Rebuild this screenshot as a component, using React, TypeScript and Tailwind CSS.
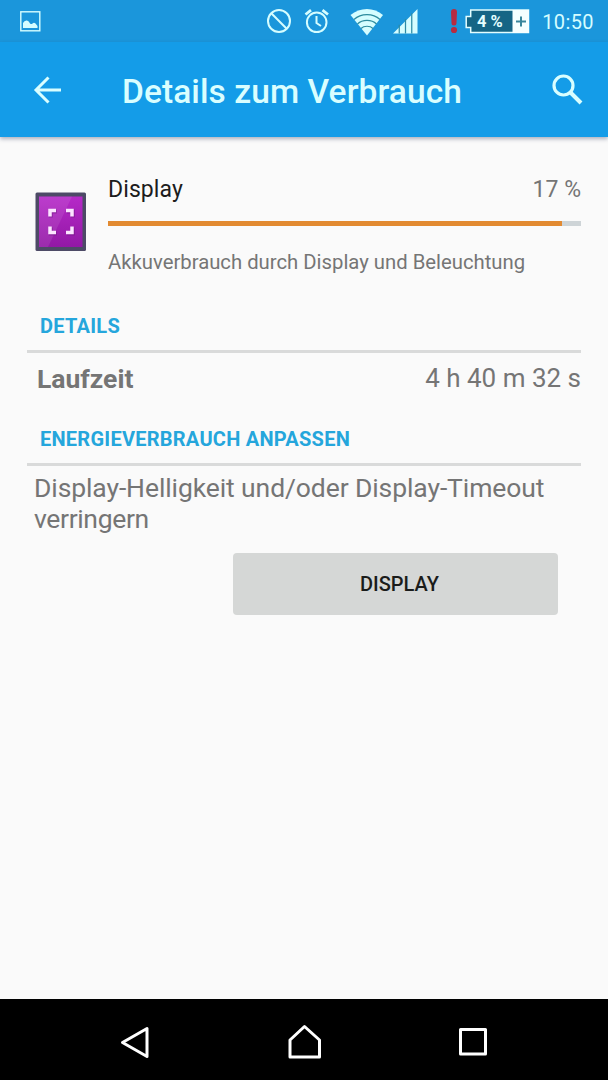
import type { ReactNode } from "react";

function StatusBar() {
  return (
    <div className="flex h-[42px] items-center bg-[#1b96db] pl-5 pr-[14px] text-[#d5fdff]">
      <svg width="21" height="21" viewBox="0 0 21 21" fill="none" className="shrink-0">
        <rect x="0.8" y="0.8" width="19" height="19" stroke="currentColor" strokeWidth="1.4" />
        <path d="M3 17v-5q1.500-3 4-2.500 2 .5 3 3 1.500 1 2.500 0 1.500-1.500 3 0l2 2.500v2z" fill="currentColor" />
      </svg>
      <svg width="26" height="26" viewBox="0 0 26 26" fill="none" stroke="currentColor" strokeWidth="2" className="ml-[225px] shrink-0">
        <circle cx="13" cy="13" r="11" />
        <path d="M5.300 5.300l15.400 15.400" />
      </svg>
      <svg width="26" height="26" viewBox="0 0 26 26" fill="none" stroke="currentColor" strokeWidth="2" className="ml-[12px] shrink-0">
        <circle cx="12.700" cy="14.300" r="9.800" />
        <path d="M12.500 8v7l4.500 3" />
        <path d="M1.500 6.500L7 2.200M24 6.500L18.500 2.200" strokeWidth="2.800" />
      </svg>
      <svg width="34" height="28" viewBox="0 0 34 28" className="ml-5 mt-px shrink-0">
        <path d="M0.500 7C10-1 24-1 33 7L17 27.500z" fill="currentColor" />
        <g fill="none" stroke="#2c8b9e" strokeWidth="1.200">
          <path d="M4 11.500c7-6.500 19-6.500 26 0" />
          <path d="M7.500 16c5-4.800 14-4.800 19 0" />
          <path d="M11 20.500c3-3 9-3 12 0" />
        </g>
      </svg>
      <svg width="25" height="27" viewBox="0 0 26 27" className="ml-[9px] mr-px mt-px shrink-0">
        <path d="M0 26L25.500 0.500V26z" fill="currentColor" />
        <path d="M6.500 17v9M13 11v15M19.500 5v21" stroke="#2c8ba5" strokeWidth="1.300" />
      </svg>
      <svg width="8" height="25" viewBox="0 0 8 25" fill="#b82b40" className="ml-[31px] shrink-0">
        <path d="M1 3q0-3 3-3t3 3L6.500 14q0 2.500-2.500 2.500T1.500 14z" />
        <circle cx="4" cy="21" r="3.100" />
      </svg>
      <div className="relative ml-[7px] h-[25px] w-[65px] shrink-0">
        <svg width="65" height="25" viewBox="0 0 65 25" fill="none">
          <path d="M5.700 1H63.500v22.500H5.700V18.500H1.200V7.500h4.500z" fill="#156585" stroke="#e4feff" strokeWidth="1.500" />
          <path d="M47.500 1H64v23H47.500z" fill="#f5ffff" />
          <path d="M56 7.500v10M51 12.500h10" stroke="#39869c" strokeWidth="2" />
        </svg>
        <span className="absolute left-[12px] top-0 whitespace-nowrap text-[16.500px] font-bold leading-[25px] text-[#e4feff]">4 %</span>
      </div>
      <span className="ml-auto mt-px whitespace-nowrap text-[20px] leading-[42px] tracking-[0.400px]">10:50</span>
    </div>
  );
}

function AppBar() {
  return (
    <header className="relative flex h-[95px] items-center bg-[#149ce8] pl-[33px] pr-[25px] text-[#d9feff] shadow-[0_2px_4px_rgba(30,40,80,0.35)]">
      <svg width="29" height="28" viewBox="0 0 29 28" fill="none" stroke="currentColor" strokeWidth="3" className="shrink-0">
        <path d="M28 14H3M15.500 1.500L3 14l12.500 12.500" />
      </svg>
      <h1 className="ml-[60px] mt-[4px] whitespace-nowrap text-[33.500px] font-medium leading-[40px] tracking-[0.080px]">Details zum Verbrauch</h1>
      <svg width="31" height="31" viewBox="0 0 31 31" fill="none" stroke="currentColor" className="ml-auto shrink-0">
        <circle cx="11.500" cy="11.500" r="9.500" strokeWidth="3.200" />
        <path d="M18.500 18.500l10.500 10.500" strokeWidth="4" />
      </svg>
    </header>
  );
}

function DisplayIcon() {
  return (
    <svg width="52" height="60" viewBox="0 0 52 60" className="ml-[35px] mt-[55px] shrink-0">
      <defs>
        <linearGradient id="panel" x1="0" y1="0" x2="0" y2="1">
          <stop offset="0" stopColor="#b629c8" />
          <stop offset="1" stopColor="#9218a5" />
        </linearGradient>
      </defs>
      <rect x="0.500" y="0.500" width="50.500" height="58.500" rx="1.500" fill="#4d4a66" />
      <rect x="4" y="4.500" width="43.500" height="50.500" fill="url(#panel)" />
      <path d="M4 4.500h33L13 55H4z" fill="#fff" opacity="0.090" />
      <g fill="none" stroke="#6d1480" strokeWidth="4" opacity="0.500" transform="translate(0.800 1)">
        <path d="M15 24.500v-6h6M31 18.500h6v6M15 34.500v6h6M31 40.500h6v-6" />
      </g>
      <path d="M15 24.500v-6h6M31 18.500h6v6M15 34.500v6h6M31 40.500h6v-6" fill="none" stroke="#fbe5ff" strokeWidth="3.500" />
    </svg>
  );
}

function SectionTitle({ children }: { children: ReactNode }) {
  return (
    <h2 className="ml-[27px] mr-[27px] flex h-[53px] items-center whitespace-nowrap border-b-[3px] border-[#d9dada] pl-[13px] pt-[2px] text-[20px] font-bold tracking-[0.250px] text-[#25a6dc]">
      {children}
    </h2>
  );
}

function NavBar() {
  return (
    <nav className="flex h-[81px] items-center bg-black pl-[120px] pt-[5px] text-white">
      <svg width="30" height="34" viewBox="0 0 30 34" fill="none" stroke="currentColor" strokeWidth="3" strokeLinejoin="round" className="mt-px">
        <path d="M27 2.500v28L2.500 16.500z" />
      </svg>
      <svg width="36" height="36" viewBox="0 0 36 36" fill="none" stroke="currentColor" strokeWidth="3" strokeLinejoin="round" className="ml-[137px]">
        <path d="M3 16L17.500 2.500 32.500 16v17H3z" />
      </svg>
      <svg width="30" height="30" viewBox="0 0 30 30" fill="none" stroke="currentColor" strokeWidth="3" strokeLinejoin="round" className="ml-[135px]">
        <rect x="2.500" y="2.500" width="25" height="24.500" />
      </svg>
    </nav>
  );
}

export default function App() {
  return (
    <div className="flex h-[1080px] w-[608px] flex-col overflow-hidden bg-[#fafafa] font-['Roboto',sans-serif] text-[#757575]">
      <StatusBar />
      <AppBar />
      <main className="flex flex-1 flex-col">
        <section className="flex h-[163px]">
          <DisplayIcon />
          <div className="ml-[21px] mr-[27px] flex-1 pt-[38px]">
            <div className="flex justify-between text-[23px] leading-[30px]">
              <span className="tracking-[0.100px] text-[#1c1c1c]">Display</span>
              <span>17 %</span>
            </div>
            <div className="mt-[16px] h-[5px] bg-[#ced4d7]">
              <div className="h-full w-[454px] bg-[#e28a31]" />
            </div>
            <p className="mt-[21px] whitespace-nowrap text-[20.300px] leading-[30px]">Akkuverbrauch durch Display und Beleuchtung</p>
          </div>
        </section>
        <SectionTitle>DETAILS</SectionTitle>
        <div className="ml-[37px] mr-[27px] flex h-[60px] items-center justify-between pb-[9px] text-[26px]">
          <span className="text-[26.500px] font-bold">Laufzeit</span>
          <span>4 h 40 m 32 s</span>
        </div>
        <SectionTitle>ENERGIEVERBRAUCH ANPASSEN</SectionTitle>
        <p className="ml-[34px] mt-[6px] whitespace-nowrap text-[26.500px] leading-[31px] tracking-[-0.100px]">
          Display-Helligkeit und/oder Display-Timeout
          <br />
          <span className="tracking-[-0.350px]">verringern</span>
        </p>
        <button className="ml-[233px] mt-[19px] h-[62px] w-[325px] rounded-[4px] bg-[#d5d7d6] pl-[8px] text-[20px] font-medium text-[#1a1c1b]">DISPLAY</button>
      </main>
      <NavBar />
    </div>
  );
}
